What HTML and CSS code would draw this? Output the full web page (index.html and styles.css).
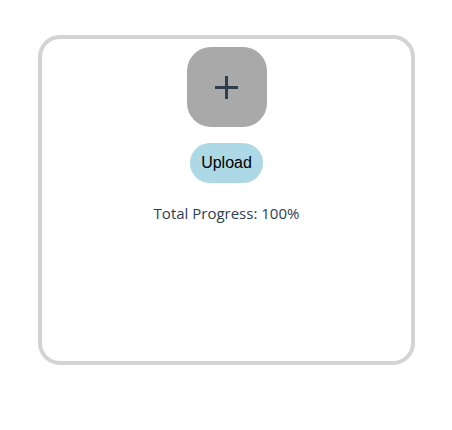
FILE: index.html
```html
<!DOCTYPE html>
<html>
<head>
<meta charset="utf-8">
<link rel="stylesheet" href="styles.css">
</head>
<body>
<div class="page">
  <div class="card">
    <div class="add-box">
      <svg class="plus" width="23" height="23" viewBox="0 0 23 23">
        <rect x="10" y="0" width="3" height="23" fill="#2c3e50"/>
        <rect x="0" y="10" width="23" height="3" fill="#2c3e50"/>
      </svg>
    </div>
    <button class="upload">Upload</button>
    <p class="progress">Total Progress: 100%</p>
  </div>
</div>
</body>
</html>
```
FILE: styles.css
```css
html, body {
  margin: 0;
  padding: 0;
  background: #ffffff;
}
.page {
  padding-top: 35px;
  padding-left: 38px;
}
.card {
  box-sizing: border-box;
  width: 377px;
  height: 330px;
  border: 4px solid #d3d3d3;
  border-radius: 22px;
  padding-top: 8px;
  display: flex;
  flex-direction: column;
  align-items: center;
}
.add-box {
  width: 80px;
  height: 80px;
  border-radius: 24px;
  background: #a9a9a9;
  display: flex;
  align-items: center;
  justify-content: center;
}
.plus {
  display: block;
}
.upload {
  margin-top: 16px;
  height: 40px;
  padding: 0 11px;
  border: none;
  border-radius: 20px;
  background: #add8e6;
  color: #000;
  font-family: "Liberation Sans", Arial, sans-serif;
  font-size: 16px;
}
.progress {
  margin: 20px 0 0;
  font-family: "Open Sans", "Noto Sans", sans-serif;
  font-size: 15px;
  line-height: 20px;
  color: #2c3e50;
}
```
